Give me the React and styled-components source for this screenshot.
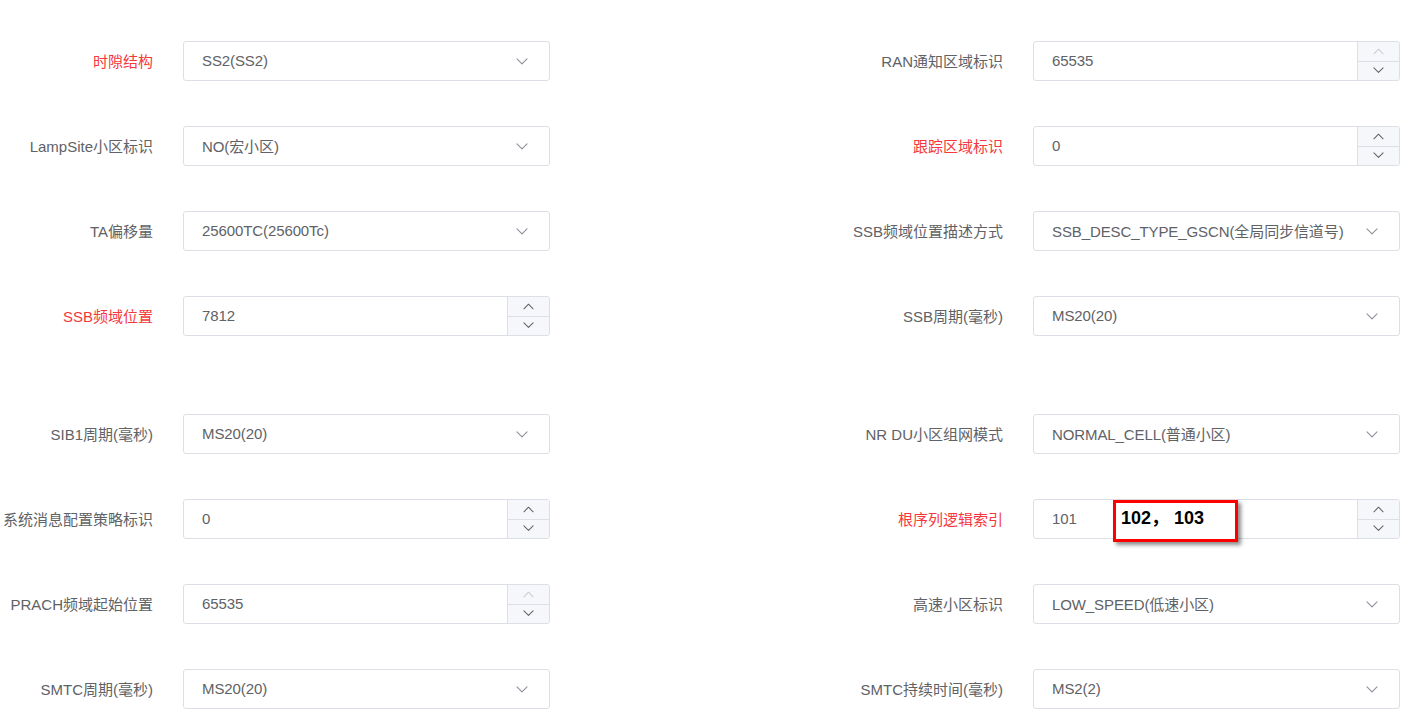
import React from "react";
import styled, { createGlobalStyle } from "styled-components";

const Global = createGlobalStyle`
  html, body { margin: 0; padding: 0; background: #fff; }
  body { font-family: "Liberation Sans", "Noto Sans CJK SC", sans-serif; }
`;

const Page = styled.div`
  width: 1418px;
  height: 721px;
  overflow: hidden;
  box-sizing: border-box;
  padding-top: 41px;
`;

const Section = styled.div`
  display: grid;
  grid-template-columns: 550px 550px;
  column-gap: 300px;
  row-gap: 45px;
  margin-bottom: ${(p) => p.$after || 0}px;
`;

const Field = styled.div`
  display: flex;
  align-items: center;
  height: 40px;
`;

const Label = styled.div`
  width: 183px;
  flex: none;
  box-sizing: border-box;
  padding-right: 30px;
  padding-bottom: 2px;
  text-align: right;
  white-space: nowrap;
  font-size: 15px;
  color: ${(p) => (p.$required ? "#f5383b" : "#606266")};
`;

const Box = styled.div`
  position: relative;
  width: 367px;
  height: 40px;
  box-sizing: border-box;
  border: 1px solid #dcdfe6;
  border-radius: 3px;
  background: #fff;
  display: flex;
  align-items: stretch;
`;

const Value = styled.div`
  flex: 1;
  min-width: 0;
  display: flex;
  align-items: center;
  padding-left: 18px;
  padding-bottom: 2px;
  font-size: 15px;
  letter-spacing: -0.1px;
  color: #606266;
  white-space: nowrap;
`;

const Caret = styled.div`
  width: 54px;
  flex: none;
  display: flex;
  align-items: center;
  justify-content: center;
  padding-top: 1px;
`;

const Spin = styled.div`
  width: 41px;
  flex: none;
  border-left: 1px solid #dcdfe6;
  display: flex;
  flex-direction: column;
  background: #f5f7fa;
  border-radius: 0 3px 3px 0;
`;

const SpinBtn = styled.div`
  flex: 1;
  display: flex;
  align-items: center;
  justify-content: center;
  color: ${(p) => (p.$disabled ? "#c8cbd2" : "#606266")};
  & + & { border-top: 1px solid #dcdfe6; }
`;

const Note = styled.div`
  position: absolute;
  left: 79px;
  top: 0px;
  width: 125px;
  height: 42px;
  box-sizing: border-box;
  border: 3px solid #ff0000;
  background: #fff;
  box-shadow: 3px 3px 4px rgba(0, 0, 0, 0.45);
  font-family: "Liberation Sans", "Noto Sans CJK SC", sans-serif;
  font-weight: bold;
  font-size: 18px;
  line-height: 22px;
  color: #000;
  padding: 4px 0 0 5px;
  white-space: nowrap;
  z-index: 2;
`;

const Chevron = ({ up, size = 12, color = "currentColor", sw = 1.1 }) => (
  <svg width={size} height={size * 0.6} viewBox="0 0 12 7" fill="none">
    <path
      d={up ? "M1 6.2 L6 1.2 L11 6.2" : "M1 0.8 L6 5.8 L11 0.8"}
      stroke={color}
      strokeWidth={sw}
      strokeLinecap="round"
      strokeLinejoin="round"
    />
  </svg>
);

const Select = ({ value }) => (
  <Box>
    <Value>{value}</Value>
    <Caret>
      <Chevron size={12} color="#8d9099" />
    </Caret>
  </Box>
);

const NumberInput = ({ value, upDisabled, downDisabled, children }) => (
  <Box>
    <Value>{value}</Value>
    <Spin>
      <SpinBtn $disabled={upDisabled}>
        <Chevron up size={11} />
      </SpinBtn>
      <SpinBtn $disabled={downDisabled}>
        <Chevron size={11} />
      </SpinBtn>
    </Spin>
    {children}
  </Box>
);

const Row = ({ label, required, children }) => (
  <Field>
    <Label $required={required}>{label}</Label>
    {children}
  </Field>
);

export default function App() {
  return (
    <>
      <Global />
      <Page>
        <Section $after={78}>
          <Row label="时隙结构" required>
            <Select value="SS2(SS2)" />
          </Row>
          <Row label="RAN通知区域标识">
            <NumberInput value="65535" upDisabled />
          </Row>
          <Row label="LampSite小区标识">
            <Select value="NO(宏小区)" />
          </Row>
          <Row label="跟踪区域标识" required>
            <NumberInput value="0" />
          </Row>
          <Row label="TA偏移量">
            <Select value="25600TC(25600Tc)" />
          </Row>
          <Row label="SSB频域位置描述方式">
            <Select value="SSB_DESC_TYPE_GSCN(全局同步信道号)" />
          </Row>
          <Row label="SSB频域位置" required>
            <NumberInput value="7812" />
          </Row>
          <Row label="SSB周期(毫秒)">
            <Select value="MS20(20)" />
          </Row>
        </Section>
        <Section>
          <Row label="SIB1周期(毫秒)">
            <Select value="MS20(20)" />
          </Row>
          <Row label="NR DU小区组网模式">
            <Select value="NORMAL_CELL(普通小区)" />
          </Row>
          <Row label="系统消息配置策略标识">
            <NumberInput value="0" />
          </Row>
          <Row label="根序列逻辑索引" required>
            <NumberInput value="101">
              <Note>102， 103</Note>
            </NumberInput>
          </Row>
          <Row label="PRACH频域起始位置">
            <NumberInput value="65535" upDisabled />
          </Row>
          <Row label="高速小区标识">
            <Select value="LOW_SPEED(低速小区)" />
          </Row>
          <Row label="SMTC周期(毫秒)">
            <Select value="MS20(20)" />
          </Row>
          <Row label="SMTC持续时间(毫秒)">
            <Select value="MS2(2)" />
          </Row>
        </Section>
      </Page>
    </>
  );
}
